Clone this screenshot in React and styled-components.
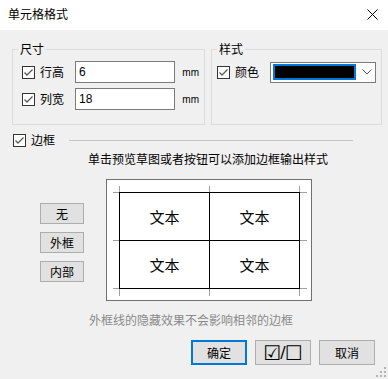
import React from 'react'
import styled, { createGlobalStyle } from 'styled-components'

const GlobalStyle = createGlobalStyle`
  html, body {
    margin: 0;
    padding: 0;
  }
  body {
    background: #f0f0f0;
    font-family: "Noto Sans CJK SC", "Liberation Sans", sans-serif;
    font-size: 12px;
    color: #000;
  }
`

const Window = styled.div`
  position: relative;
  width: 388px;
  height: 379px;
  background: #f0f0f0;
  overflow: hidden;
`

const TitleBar = styled.div`
  height: 30px;
  box-sizing: border-box;
  padding: 0 10px 2px 8px;
  background: #fff;
  display: flex;
  align-items: center;
  justify-content: space-between;
  line-height: 16px;
`

const Body = styled.div`
  padding: 11px 6px 0 12px;
`

const GroupRow = styled.div`
  display: flex;
  gap: 6px;
`

const Group = styled.fieldset`
  margin: 0;
  min-width: 0;
  box-sizing: border-box;
  width: ${p => p.$w}px;
  border: 1px solid #dcdcdc;
  padding: 4px 5px 14px;
  display: flex;
  flex-direction: column;
  gap: 5px;
`

const Legend = styled.legend`
  padding: 0 2px;
  line-height: 16px;
`

const Row = styled.div`
  display: flex;
  align-items: center;
  height: 22px;
  padding-left: ${p => p.$indent || 0}px;
`

const CheckLabel = styled.label`
  display: flex;
  align-items: center;
  gap: ${p => p.$gap || 5}px;
  width: ${p => (p.$w ? `${p.$w}px` : 'auto')};
  line-height: 16px;
`

const TextInput = styled.div`
  width: 102px;
  height: 22px;
  box-sizing: border-box;
  border: 1px solid #7a7a7a;
  background: #fff;
  padding: 0 3px;
  display: flex;
  align-items: center;
  font-family: "Liberation Sans", sans-serif;
  font-size: 12px;
`

const Unit = styled.span`
  margin-left: 7px;
  font-family: "Liberation Sans", sans-serif;
  font-size: 10px;
`

const ColorSelect = styled.div`
  width: 106px;
  height: 21px;
  box-sizing: border-box;
  border: 1px solid #7a7a7a;
  background: #fff;
  display: flex;
  align-items: center;
  padding-left: 2px;
  gap: 6px;
`

const Swatch = styled.div`
  width: 83px;
  height: 16px;
  box-sizing: border-box;
  border: 2px solid #0078d7;
  background: #000;
`

const BorderRow = styled.div`
  margin-top: 7px;
  display: flex;
  align-items: center;
  height: 16px;
  padding-left: 1px;
`

const Rule = styled.div`
  flex: 1;
  height: 1px;
  background: #c4c4c4;
  margin: 1px 29px 0 14px;
`

const Hint = styled.div`
  margin: ${p => p.$top || 3}px 0 0 ${p => p.$left}px;
  line-height: 16px;
  color: ${p => (p.$muted ? '#8a8a8a' : '#000')};
`

const PreviewRow = styled.div`
  margin-top: 12px;
  display: flex;
  align-items: flex-start;
`

const SideButtons = styled.div`
  margin: 24px 22px 0 28px;
  display: flex;
  flex-direction: column;
  gap: 8px;
`

const Button = styled.button`
  width: ${p => p.$w}px;
  height: ${p => p.$h}px;
  box-sizing: border-box;
  margin: 0;
  padding: 0;
  background: #e1e1e1;
  border: ${p => (p.$primary ? '2px solid #0078d7' : '1px solid #adadad')};
  font-family: inherit;
  font-size: 12px;
  color: #000;
  display: flex;
  align-items: center;
  justify-content: center;
`

const PreviewBox = styled.div`
  position: relative;
  width: 206px;
  height: 122px;
  box-sizing: border-box;
  border: 1px solid #707070;
  background: #fff;
  padding: 12px 11px 11px 12px;
`

const Sketch = styled.div`
  display: grid;
  grid-template-columns: 90px 90px;
  grid-template-rows: 48px 48px;
  border-top: 1px solid #000;
  border-left: 1px solid #000;
  width: 181px;
`

const Cell = styled.div`
  border-right: 1px solid #000;
  border-bottom: 1px solid #000;
  display: flex;
  align-items: center;
  justify-content: center;
  font-size: 15px;
`

const Ticks = styled.svg`
  position: absolute;
  left: 0;
  top: 0;
  pointer-events: none;
`

const Footer = styled.div`
  margin-top: 12px;
  padding-right: 7px;
  display: flex;
  justify-content: flex-end;
  gap: 8px;
`

const ToggleGlyph = styled.span`
  font-family: "DejaVu Sans", sans-serif;
  font-size: ${p => (p.$slash ? 16 : 20)}px;
  line-height: 1;
  margin: ${p => (p.$slash ? '0 -1px' : '0')};
`

const Grip = styled.svg`
  position: absolute;
  right: 2px;
  bottom: 2px;
`

const CheckBox = () => (
  <svg width="13" height="13" viewBox="0 0 13 13">
    <rect x="0.5" y="0.5" width="12" height="12" fill="#fff" stroke="#333" />
    <polyline points="2.5,6.5 5,9 10.5,3.5" fill="none" stroke="#5a5a5a" strokeWidth="1.3" />
  </svg>
)

const CloseIcon = () => (
  <svg width="11" height="11" viewBox="0 0 11 11">
    <path d="M0.5 0.5 L10.5 10.5 M10.5 0.5 L0.5 10.5" stroke="#000" strokeWidth="1" />
  </svg>
)

const Chevron = () => (
  <svg width="10" height="6" viewBox="0 0 10 6">
    <polyline points="0.5,0.5 5,5 9.5,0.5" fill="none" stroke="#555" strokeWidth="1" />
  </svg>
)

const tickX = [12.5, 102.5, 192.5]
const tickY = [12.5, 60.5, 108.5]

const App = () => {
  return (
    <Window>
      <GlobalStyle />
      <TitleBar>
        <span>单元格格式</span>
        <CloseIcon />
      </TitleBar>
      <Body>
        <GroupRow>
          <Group $w={193}>
            <Legend>尺寸</Legend>
            <Row $indent={4}>
              <CheckLabel $w={54}><CheckBox />行高</CheckLabel>
              <TextInput>6</TextInput>
              <Unit>mm</Unit>
            </Row>
            <Row $indent={4}>
              <CheckLabel $w={54}><CheckBox />列宽</CheckLabel>
              <TextInput>18</TextInput>
              <Unit>mm</Unit>
            </Row>
          </Group>
          <Group $w={171}>
            <Legend>样式</Legend>
            <Row $indent={0}>
              <CheckLabel $w={53}><CheckBox />颜色</CheckLabel>
              <ColorSelect>
                <Swatch />
                <Chevron />
              </ColorSelect>
            </Row>
          </Group>
        </GroupRow>

        <BorderRow>
          <CheckLabel $gap={5}><CheckBox />边框</CheckLabel>
          <Rule />
        </BorderRow>
        <Hint $left={76}>单击预览草图或者按钮可以添加边框输出样式</Hint>

        <PreviewRow>
          <SideButtons>
            <Button $w={44} $h={21}>无</Button>
            <Button $w={44} $h={21}>外框</Button>
            <Button $w={44} $h={21}>内部</Button>
          </SideButtons>
          <PreviewBox>
            <Sketch>
              <Cell>文本</Cell>
              <Cell>文本</Cell>
              <Cell>文本</Cell>
              <Cell>文本</Cell>
            </Sketch>
            <Ticks width="204" height="120" viewBox="0 0 204 120">
              {tickX.map(x => (
                <g key={`v${x}`} stroke="#a0a0a0" strokeWidth="1">
                  <line x1={x} y1="6" x2={x} y2="12" />
                  <line x1={x} y1="109" x2={x} y2="116" />
                </g>
              ))}
              {tickY.map(y => (
                <g key={`h${y}`} stroke="#a0a0a0" strokeWidth="1">
                  <line x1="6" y1={y} x2="12" y2={y} />
                  <line x1="193" y1={y} x2="200" y2={y} />
                </g>
              ))}
            </Ticks>
          </PreviewBox>
        </PreviewRow>

        <Hint $left={77} $top={11} $muted>外框线的隐藏效果不会影响相邻的边框</Hint>

        <Footer>
          <Button $w={56} $h={25} $primary>确定</Button>
          <Button $w={56} $h={25}>
            <ToggleGlyph>☑</ToggleGlyph>
            <ToggleGlyph $slash>/</ToggleGlyph>
            <ToggleGlyph>☐</ToggleGlyph>
          </Button>
          <Button $w={56} $h={25}>取消</Button>
        </Footer>
      </Body>
      <Grip width="10" height="10" viewBox="0 0 10 10">
        {[[8, 0], [8, 4], [4, 4], [8, 8], [4, 8], [0, 8]].map(([x, y]) => (
          <rect key={`${x}-${y}`} x={x} y={y} width="2" height="2" fill="#b4b4b4" />
        ))}
      </Grip>
    </Window>
  )
}

export default App
